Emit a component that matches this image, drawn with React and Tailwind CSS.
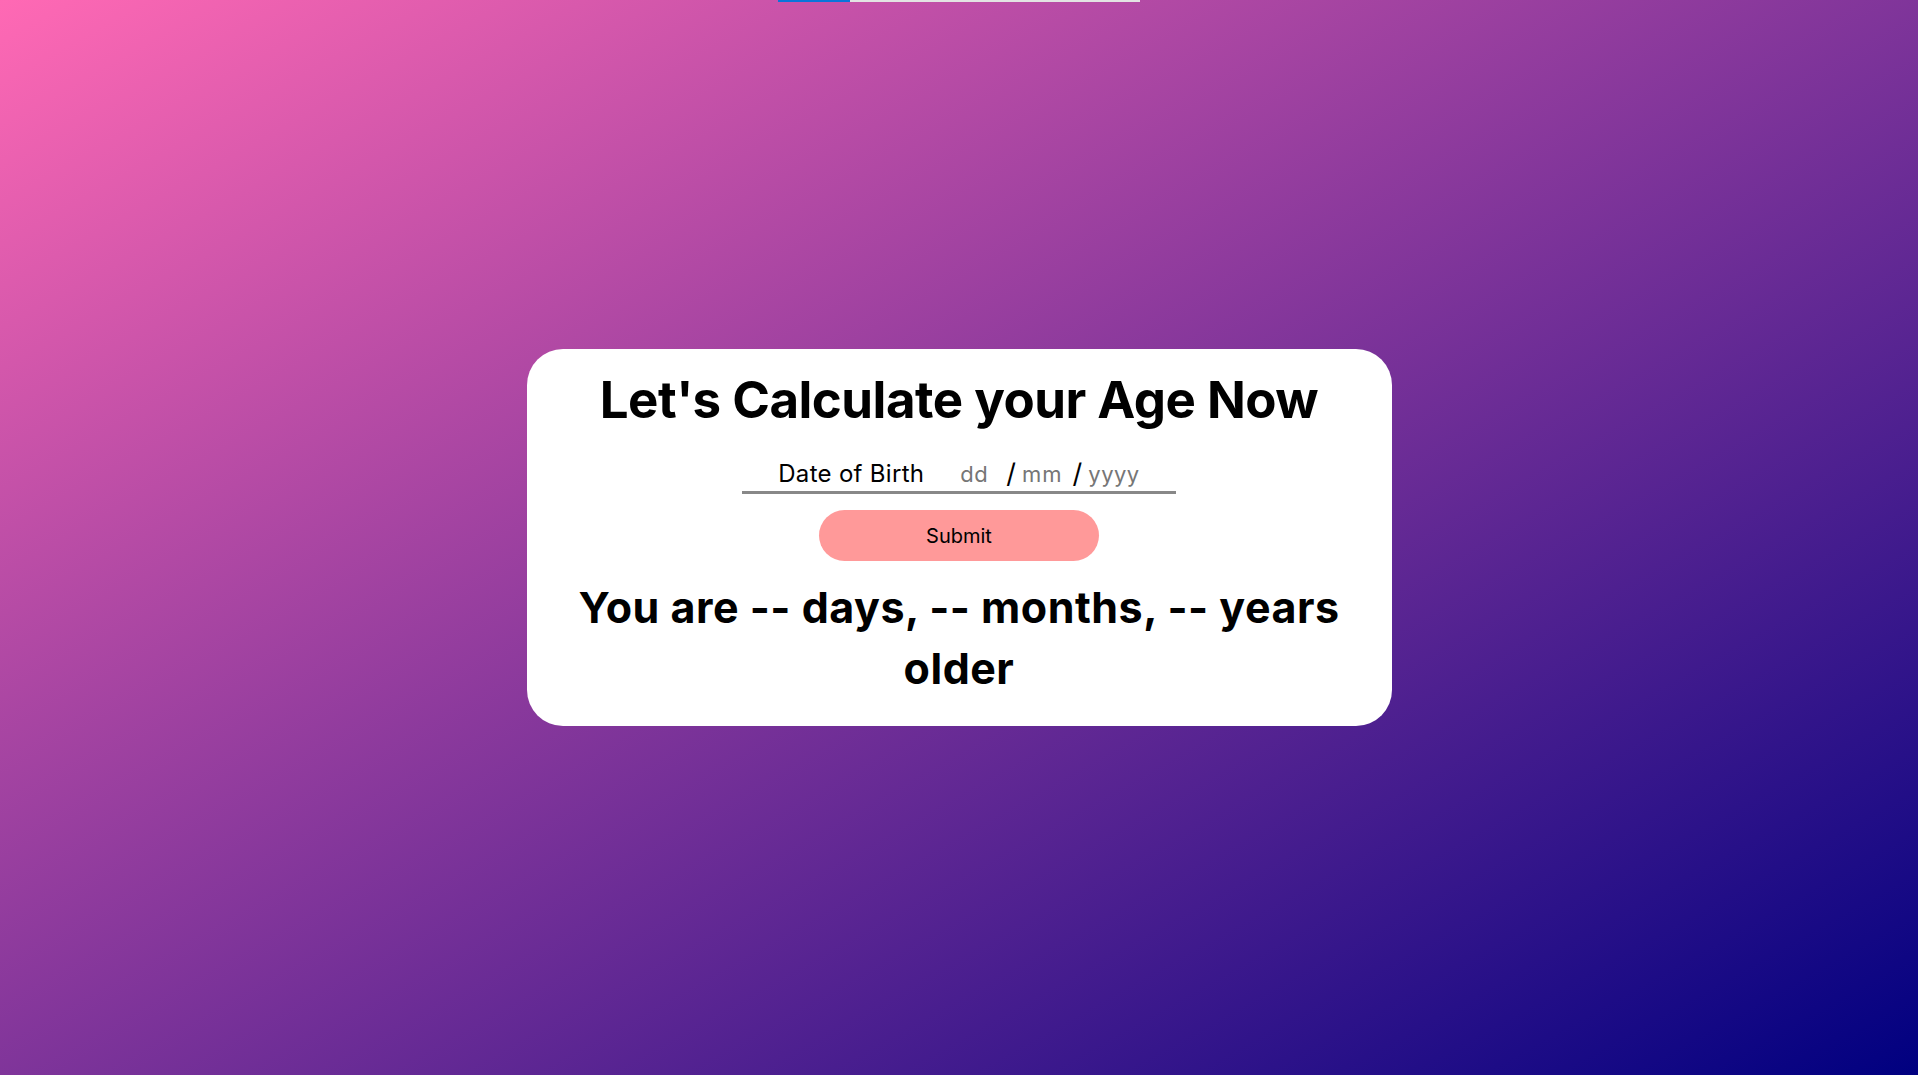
import React from 'react'

// Age calculator card on a pink → navy gradient

const DateField = () => (
  <div className="flex items-end">
    <span className="ml-[36px] text-[22px] leading-[32px] text-[#767676] tracking-[0.5px]">dd</span>
    <span className="ml-[18px] text-[27px] leading-[32px] text-black">/</span>
    <span className="ml-[6px] text-[22px] leading-[32px] text-[#767676] tracking-[1px]">mm</span>
    <span className="ml-[10px] text-[27px] leading-[32px] text-black">/</span>
    <span className="ml-[6px] text-[22px] leading-[32px] text-[#767676] tracking-[0.5px]">yyyy</span>
  </div>
)

export default function App() {
  return (
    <div className="relative min-h-screen w-full flex items-center justify-center bg-[linear-gradient(to_bottom_right,#ff69b4,#000080)] font-['Inter','Liberation_Sans',sans-serif]">
      {/* thin strip at the very top */}
      <div className="absolute top-0 left-1/2 -translate-x-1/2 w-[362px] h-[2px] bg-[#e3e3e3] flex">
        <div className="w-[72px] h-full bg-[#0a74da]" />
      </div>

      <div className="w-[865px] bg-white rounded-[36px] px-[40px] pt-[21px] pb-[27px] flex flex-col items-center">
        <h1 className="text-[51px] leading-[60px] font-bold text-black text-center tracking-[-0.5px]">
          Let's Calculate your Age Now
        </h1>

        <div className="mt-[28px] w-[434px] border-b-[3px] border-[#888888] flex justify-center items-end pb-[1px]">
          <label className="text-[24px] leading-[32px] text-black tracking-[0.3px]">Date of Birth</label>
          <DateField />
        </div>

        <button className="mt-[16px] w-[280px] h-[51px] rounded-full bg-[#ff9999] text-[20px] text-black">
          Submit
        </button>

        <p className="mt-[16px] text-[43px] leading-[61px] font-bold text-black text-center tracking-[0.5px]">
          You are -- days, -- months, -- years older
        </p>
      </div>
    </div>
  )
}
